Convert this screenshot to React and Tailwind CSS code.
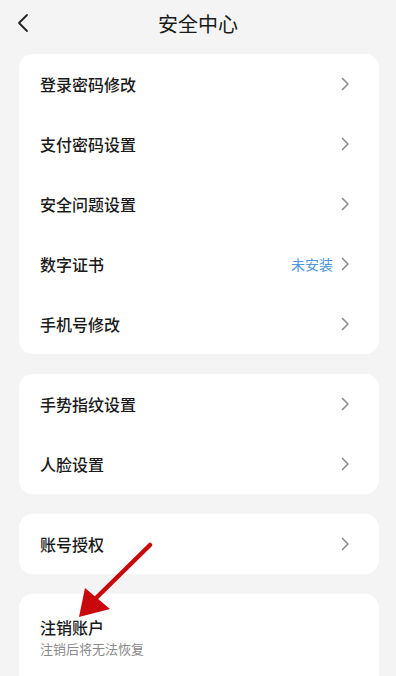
import React from "react";

const font = { fontFamily: '"Noto Sans CJK SC", "Noto Sans", sans-serif' };

const Chevron = () => (
  <svg width="9" height="14" viewBox="0 0 9 14" fill="none">
    <path d="M1.5 1.5 7 7l-5.5 5.5" stroke="#8a8a8a" strokeWidth="1.5" strokeLinecap="round" strokeLinejoin="round" />
  </svg>
);

const Row = ({ label, extra }) => (
  <div className="flex items-center h-[60px] pl-[21px] pr-[29px]">
    <span className="flex-1 text-[16px] font-medium text-[#1a1a1a]">{label}</span>
    {extra && <span className="text-[14px] text-[#4f97e0] mr-[8px]">{extra}</span>}
    <Chevron />
  </div>
);

const Card = ({ children }) => (
  <div className="bg-white rounded-[14px] ml-[19px] w-[360px] overflow-hidden">{children}</div>
);

export default function App() {
  return (
    <div className="relative w-[396px] h-[676px] bg-[#f4f4f4] overflow-hidden" style={font}>
      {/* header */}
      <div className="relative flex items-center justify-center h-[47px]">
        <div className="absolute left-[16px] top-[13px]">
          <svg width="14" height="20" viewBox="0 0 14 20" fill="none">
            <path d="M11 2 3 10l8 8" stroke="#222" strokeWidth="1.8" strokeLinecap="round" strokeLinejoin="round" />
          </svg>
        </div>
        <h1 className="text-[20px] text-[#1a1a1a]">安全中心</h1>
      </div>

      <div className="flex flex-col gap-[20px] mt-[7px]">
        <Card>
          <Row label="登录密码修改" />
          <Row label="支付密码设置" />
          <Row label="安全问题设置" />
          <Row label="数字证书" extra="未安装" />
          <Row label="手机号修改" />
        </Card>
        <Card>
          <Row label="手势指纹设置" />
          <Row label="人脸设置" />
        </Card>
        <Card>
          <Row label="账号授权" />
        </Card>
        <Card>
          <div className="pl-[21px] pt-[22px] pb-[30px]">
            <div className="text-[16px] font-medium text-[#1a1a1a] leading-[22px]">注销账户</div>
            <div className="text-[13px] text-[#8a8a8a] leading-[20px] mt-[1px]">注销后将无法恢复</div>
          </div>
        </Card>
      </div>

      {/* annotation arrow */}
      <svg className="absolute left-0 top-0 pointer-events-none" width="396" height="676">
        <line x1="150" y1="545" x2="92" y2="602" stroke="#c8080c" strokeWidth="4.5" strokeLinecap="round" />
        <polygon points="79,617 85,588 110,609" fill="#c8080c" />
      </svg>
    </div>
  );
}
